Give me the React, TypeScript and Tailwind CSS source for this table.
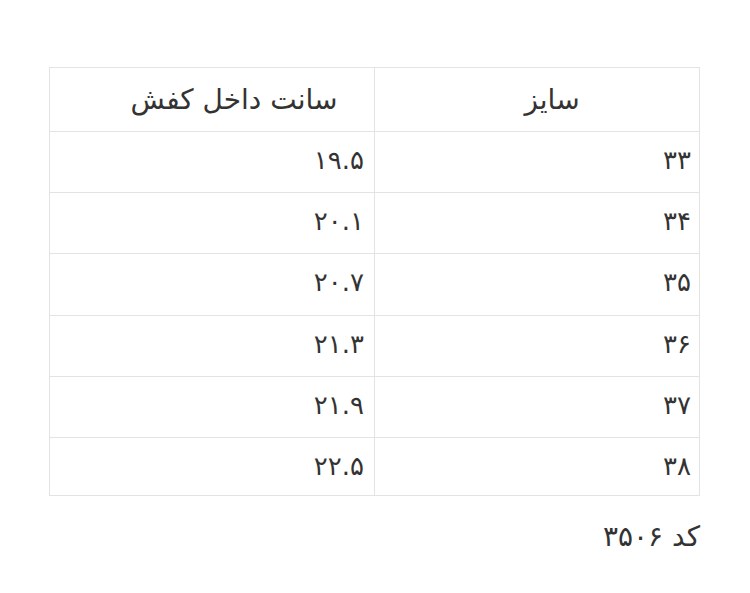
import React from "react";

const rows = [
  ["۳۳", "۱۹.۵"],
  ["۳۴", "۲۰.۱"],
  ["۳۵", "۲۰.۷"],
  ["۳۶", "۲۱.۳"],
  ["۳۷", "۲۱.۹"],
  ["۳۸", "۲۲.۵"],
];

export default function App() {
  return (
    <div
      dir="rtl"
      className="w-[750px] h-[593px] bg-white text-[#333333] pt-[67px] px-[50px]"
      style={{ fontFamily: '"DejaVu Sans", "Noto Sans", sans-serif' }}
    >
      <table className="w-[651px] border-collapse table-fixed text-[26px]">
        <thead>
          <tr className="h-[64px]">
            <th className="border border-[#e3e3e3] font-normal text-[28px] text-center pl-[30px] w-[325px]">سایز</th>
            <th className="border border-[#e3e3e3] font-normal text-[28px] text-center pl-[44px]">سانت داخل کفش</th>
          </tr>
        </thead>
        <tbody>
          {rows.map(([a, b], i) => (
            <tr key={i} className={i === rows.length - 1 ? "h-[58px]" : "h-[61.2px]"}>
              <td className="border border-[#e3e3e3] align-top pt-[9px] pr-[8px] text-right">{a}</td>
              <td className="border border-[#e3e3e3] align-top pt-[9px] pr-[10px] text-right">{b}</td>
            </tr>
          ))}
        </tbody>
      </table>
      <div className="mt-[20px] text-[28px]">کد ۳۵۰۶</div>
    </div>
  );
}
